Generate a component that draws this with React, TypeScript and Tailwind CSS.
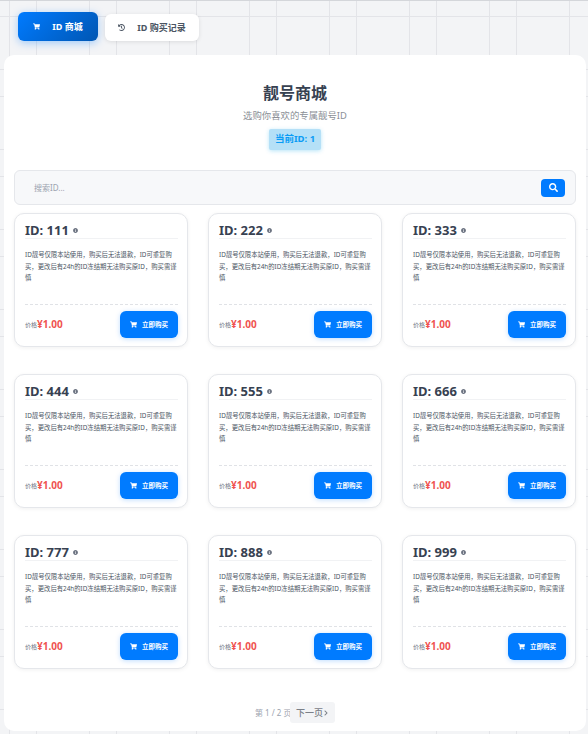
import React from 'react';
import { FaShoppingCart, FaHistory, FaSearch, FaInfoCircle, FaChevronRight } from 'react-icons/fa';

const ids = ['111', '222', '333', '444', '555', '666', '777', '888', '999'];

const desc =
  'ID靓号仅限本站使用，购买后无法退款，ID可重复购买，更改后有24h的ID冻结期无法购买原ID，购买需谨慎';

function IdCard({ id }: { id: string }) {
  return (
    <div className="h-[134px] rounded-[10px] border border-[#e5e7eb] bg-white pl-[10px] pr-[9px] pt-[9px] shadow-[0_1px_4px_rgba(0,0,0,0.06)] flex flex-col">
      <div className="h-[16px] flex items-center gap-[4px] border-b border-[#f1f2f4] pb-[1px]">
        <span className="text-[13px] leading-[15px] font-bold text-[#374151]">ID: {id}</span>
        <FaInfoCircle className="text-[#6b7280]" size={5} />
      </div>
      <p className="mt-[10px] h-[55px] text-[6.35px] leading-[11.5px] text-[#4b5563]">{desc}</p>
      <div className="border-t border-dashed border-[#e0e2e6]" />
      <div className="mt-[6px] flex items-center justify-between">
        <div className="flex items-center">
          <span className="text-[6px] text-[#6b7280] mt-[2px]">价格</span>
          <span className="text-[10px] font-bold text-[#ef5350]">¥1.00</span>
        </div>
        <button className="w-[58px] h-[27px] rounded-[6px] bg-[#007bff] text-white flex items-center justify-center gap-[5px] shadow-[0_1px_5px_rgba(0,123,255,0.25)]">
          <FaShoppingCart size={7} />
          <span className="text-[6.5px] font-bold">立即购买</span>
        </button>
      </div>
    </div>
  );
}

export default function App() {
  return (
    <div
      className="h-[734px] w-[588px] overflow-hidden border-t border-[#d4d6da] bg-[#f3f4f6] pl-[4px] pr-[2px] font-['Noto_Sans','Noto_Sans_CJK_SC',sans-serif] bg-[image:linear-gradient(to_right,#e3e4e8_1px,transparent_1px),linear-gradient(to_right,#e3e4e8_1px,transparent_1px),linear-gradient(to_bottom,#e3e4e8_1px,transparent_1px),linear-gradient(to_bottom,#e3e4e8_1px,transparent_1px)] bg-[size:80px_80px] bg-[position:9px_0,36px_0,0_15px,0_68px]"
    >
      <div className="h-[54px] flex items-start gap-[7px] pl-[14px] pt-[11px]">
        <button className="w-[80px] h-[29px] rounded-[6px] bg-[linear-gradient(135deg,#007bff,#0056b3)] text-white flex items-center justify-center gap-[12px] shadow-[0_2px_8px_rgba(0,123,255,0.35)]">
          <FaShoppingCart size={7} />
          <span className="text-[9px] font-bold">ID 商城</span>
        </button>
        <button className="mt-[2px] w-[94px] h-[27px] rounded-[6px] bg-white text-[#4b5563] flex items-center justify-center gap-[12px] shadow-[0_1px_4px_rgba(0,0,0,0.1)]">
          <FaHistory size={7} />
          <span className="text-[9px] font-bold">ID 购买记录</span>
        </button>
      </div>

      <main className="h-[676px] rounded-[10px] bg-white px-[10px]">
        <div className="flex flex-col items-center pt-[26px]">
          <h1 className="text-[16px] leading-[24px] font-bold text-[#374151]">靓号商城</h1>
          <p className="mt-[4px] text-[9.4px] leading-[14px] text-[#8b8f96]">选购你喜欢的专属靓号ID</p>
          <div className="mt-[6px] h-[21px] px-[6px] rounded-[2px] bg-[#b5e0f7] flex items-center text-[9.5px] font-bold text-[#0a9cf5] shadow-[0_1px_4px_rgba(14,165,233,0.3)]">
            当前ID: 1
          </div>
        </div>

        <div className="mt-[20px] h-[35px] rounded-[6px] border border-[#e5e7eb] bg-[#f7f8fa] flex items-center justify-between pl-[19px] pr-[10px]">
          <span className="text-[8px] text-[#9ca3af]">搜索ID...</span>
          <button className="w-[24px] h-[18px] rounded-[4px] bg-[#007bff] text-white flex items-center justify-center">
            <FaSearch size={9} />
          </button>
        </div>

        <div className="mt-[8px] grid grid-cols-3 gap-x-[20px] gap-y-[27px]">
          {ids.map((id) => (
            <IdCard key={id} id={id} />
          ))}
        </div>

        <div className="mt-[33px] pl-[241px] flex items-center">
          <span className="w-[35px] text-[8px] text-[#9ca3af] whitespace-nowrap">第 1 / 2 页</span>
          <button className="w-[45px] h-[21px] rounded-[3px] bg-[#f3f4f6] text-[#7b8088] flex items-center justify-center text-[9px] font-medium">
            下一页
            <FaChevronRight size={6} />
          </button>
        </div>
      </main>
    </div>
  );
}
